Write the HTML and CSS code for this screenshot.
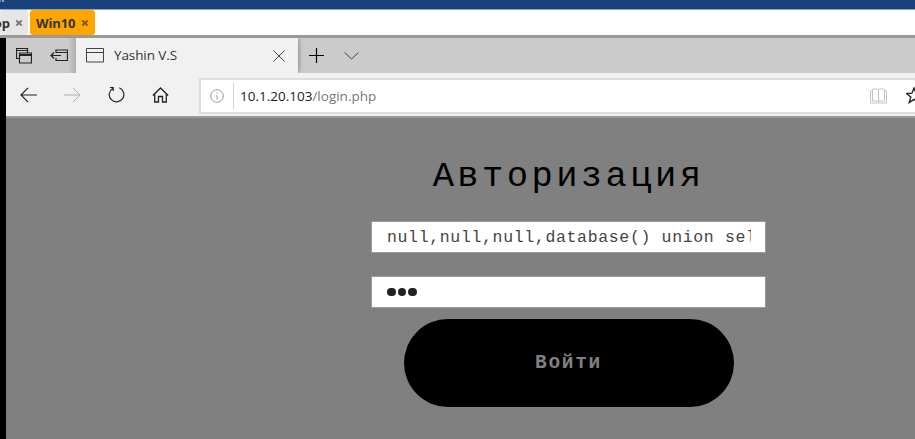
FILE: index.html
```html
<!DOCTYPE html>
<html lang="ru">
<head>
<meta charset="utf-8">
<title>Yashin V.S</title>
<link rel="stylesheet" href="styles.css">
</head>
<body>
<div class="banner"><i class="mark"></i><i class="mark pale"></i></div>
<div class="sessions">
  <div class="session first"><span class="label">op</span><svg class="close" viewBox="0 0 8 8"><path d="M1.3 1.5l5.4 5M6.7 1.5l-5.4 5"/></svg></div>
  <div class="session active"><span class="label">Win10</span><svg class="close" viewBox="0 0 8 8"><path d="M1.3 1.5l5.4 5M6.7 1.5l-5.4 5"/></svg></div>
</div>
<div class="browser">
  <div class="tabs">
    <div class="tab-tools">
      <svg width="16" height="16" viewBox="0 0 16 16"><path d="M3.500 10.500h-3v-10h11v4M.5 2.500h11M3.500 5h12v10h-12zM3.500 7.500h12M3.500 6.500h12" stroke-width="1.2"/></svg>
      <svg width="18" height="13" viewBox="0 0 18 13"><path d="M6 4V1h11.500v10.500H6V9M6 3.500h11.500M1 6.500h10M4 3.500l-3 3 3 3" stroke-width="1.2"/></svg>
    </div>
    <div class="tab">
      <svg width="18" height="15" viewBox="0 0 18 15"><path d="M.5.5h17v13.500H.5zM.5 4.500h17"/></svg>
      <span class="tab-title">Yashin V.S</span>
      <svg width="12" height="12" viewBox="0 0 12 12"><path d="M.5.5l11 11M11.500.5l-11 11"/></svg>
    </div>
    <svg class="plus" width="15" height="15" viewBox="0 0 15 15"><path d="M0 7.500h15M7.500 0v15" stroke-width="1.2"/></svg>
    <svg class="chevron" width="15" height="8" viewBox="0 0 15 8"><path d="M.5.5l7 6.500 7-6.500"/></svg>
  </div>
  <div class="toolbar">
    <svg class="back" width="17" height="16" viewBox="0 0 17 16"><path d="M17 8H1M8 .8L1 8l7 7.200" stroke-width="1.2"/></svg>
    <svg class="forward" width="17" height="16" viewBox="0 0 17 16"><path d="M0 8h16M9 .8L16 8l-7 7.200"/></svg>
    <svg class="reload" width="17" height="17" viewBox="0 0 17 17"><path d="M11.300 1.800A7.300 7.300 0 1 1 4.600 2.400M2 1.500h3.200v3.500" stroke-width="1.2"/></svg>
    <svg class="home" width="17" height="16" viewBox="0 0 17 16"><path d="M.8 8.500L8.500 1l7.700 7.500M2.700 6.800V15H6.500V9.500h4V15h3.800V6.800" stroke-width="1.3"/></svg>
    <div class="address">
      <svg class="info" width="14" height="14" viewBox="0 0 14 14"><circle cx="7" cy="7" r="6.3"/><path d="M7 6v4.500M7 3.500v1.300"/></svg>
      <span class="url"><b>10.1.20.103</b>/login.php</span>
      <svg class="book" width="17" height="16" viewBox="0 0 17 16"><path d="M2.500 1H7q1.500 0 1.500 1.500Q8.500 1 10 1h4.500v12h-12zM8.500 2v13M2.500 3H.5v12h16V3h-2"/></svg>
      <svg class="star" width="16" height="17" viewBox="0 0 16 17"><path d="M8 1l2 5.200 5.500.3-4.300 3.500 1.500 5.500L8 12.400l-4.700 3.100L4.800 10 .5 6.500l5.500-.3z" stroke-width="1.400"/></svg>
    </div>
  </div>
  <main class="page">
    <h1>Авторизация</h1>
    <div class="field"><span>null,null,null,database() union sel</span></div>
    <div class="field password"><i></i><i></i><i></i></div>
    <button type="button">Войти</button>
  </main>
</div>
</body>
</html>
```

FILE: styles.css
```css
* { box-sizing: border-box; }
body {
  margin: 0;
  height: 439px;
  overflow: hidden;
  background: #fff;
  font-family: "Open Sans", "Noto Sans", sans-serif;
}
svg { display: block; flex: none; fill: none; stroke: #222; }

.banner { display: flex; height: 10px; background: #19417b; border-bottom: 1px solid #8fa5b8; }
.mark { width: 1px; height: 2px; background: #a46c9c; }
.mark.pale { margin-left: 1px; width: 2px; background: #8ca4c0; }

.sessions { display: flex; gap: 2px; height: 28px; border-bottom: 3px solid #999; }
.session {
  display: flex;
  align-items: center;
  height: 25px;
  border-radius: 3px;
  background: #e6e6e6;
  color: #333;
  font: bold 13px/24px "Open Sans", sans-serif;
}
.session.first { width: 28px; justify-content: flex-end; padding-right: 5px; overflow: hidden; }
.session.active { width: 65px; padding-left: 6px; background: #ffa500; }
.label { flex: none; }
.close { width: 8px; height: 8px; margin-left: 5px; stroke: #777; stroke-width: 1.8; }
.active .label { width: 40px; letter-spacing: -.1px; }
.active .close { stroke: #80591a; }

.browser { height: 401px; border-left: 6px solid #000; background: #f1f1f1; }
.tabs { display: flex; align-items: center; height: 35px; background: #cbcbcb; }
.tab-tools {
  display: flex;
  align-items: center;
  gap: 18px;
  width: 70px;
  height: 35px;
  padding-left: 10px;
  background: linear-gradient(to right, #cbcbcb 62px, #b0b0b0);
}
.tab {
  display: flex;
  align-items: center;
  width: 222px;
  height: 35px;
  padding: 0 13px 0 10px;
  background: #f1f1f1;
  box-shadow: 2px 0 4px -1px #888;
  clip-path: inset(0 -6px 0 0);
}
.tab svg { stroke: #444; }
.tab-title { flex: 1; margin-left: 10px; padding-bottom: 2px; color: #333; font-size: 13.5px; letter-spacing: -.1px; }
.plus { margin-left: 11px; stroke: #000; }
.chevron { margin-left: 20px; stroke: #444; }

.toolbar { display: flex; align-items: center; height: 45px; border-bottom: 2px solid #999; }
.back { margin-left: 14px; }
.forward { margin-left: 27px; stroke: #b0b0b0; }
.reload { margin-left: 27px; }
.home { margin-left: 27px; }
.address {
  display: flex;
  align-items: center;
  flex: none;
  width: 740px;
  height: 36px;
  margin-left: 30px;
  margin-top: 2px;
  border: 2px solid #dedede;
  background: #fff;
}
.info { margin-left: 9px; stroke: #999; }
.url {
  width: 635px;
  height: 26px;
  margin-left: 9px;
  padding-left: 6px;
  border-left: 1px solid #d5d5d5;
  color: #777;
  font-size: 13.5px;
  line-height: 26px;
  letter-spacing: 0;
}
.url b { color: #1a1a1a; font-weight: 400; }
.book { margin-left: 2px; stroke: #c5c5c5; }
.star { margin-left: 19px; stroke: #222; }

.page {
  display: flex;
  flex-direction: column;
  align-items: center;
  height: 321px;
  padding-left: 206px;
  background: #808080;
  font-family: "Liberation Mono", monospace;
}
h1 {
  height: 62px;
  margin: 41px 0 0 10px;
  color: #000;
  font-size: 35.5px;
  font-weight: 400;
  line-height: 35px;
  letter-spacing: 3.4px;
}
.field {
  display: flex;
  align-items: center;
  width: 395px;
  height: 32px;
  margin: 0 0 23px 10px;
  padding: 0 14px 0 15px;
  border: 1px solid #999;
  background: #fff;
}
.field span {
  overflow: hidden;
  white-space: pre;
  color: #444;
  font-size: 16.5px;
  letter-spacing: .66px;
}
.password { gap: 2px; margin-bottom: 11px; }
.password i { width: 8.7px; height: 8.7px; border-radius: 50%; background: #222; }
button {
  width: 330px;
  height: 88px;
  margin-left: 10px;
  padding: 0;
  border: 0;
  border-radius: 44px;
  background: #000;
  color: #808080;
  font: bold 19.5px "Liberation Mono", monospace;
  letter-spacing: 1.7px;
}
```
